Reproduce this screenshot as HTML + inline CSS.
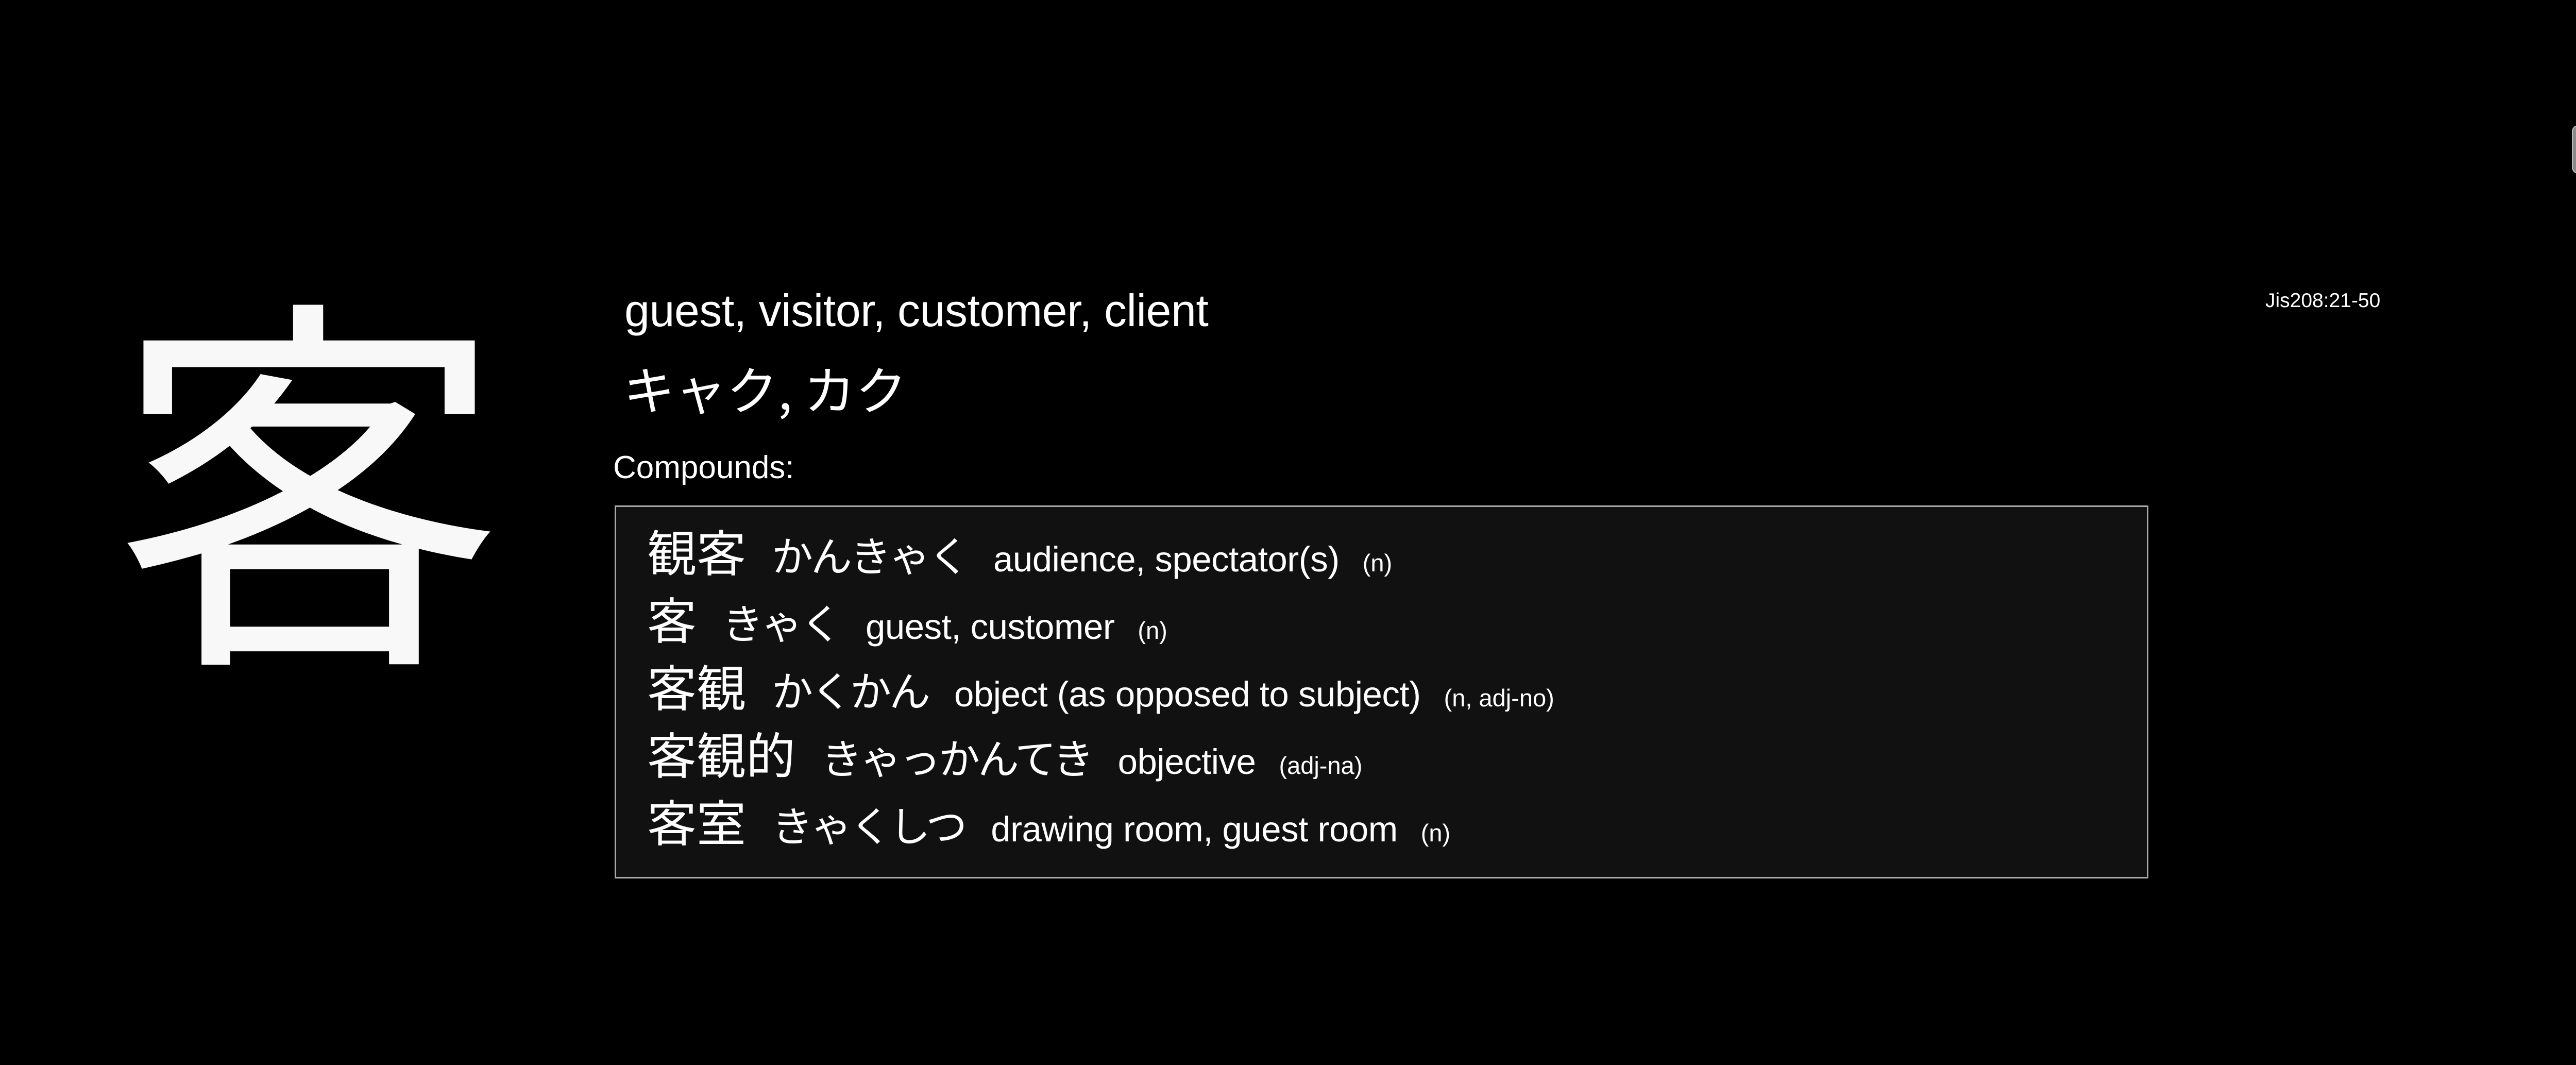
<!DOCTYPE html>
<html><head><meta charset="utf-8"><style>
html,body{margin:0;padding:0;background:#000;width:5008px;height:2067px;overflow:hidden;position:relative;color:#fff;font-family:"Liberation Sans","Noto Sans CJK JP",sans-serif}
.a{position:absolute;white-space:nowrap;line-height:1}
.big{left:220px;top:519px;font-size:760px;line-height:760px;font-family:"Noto Sans CJK JP",sans-serif;color:#f8f8f8}
.box{position:absolute;left:1193px;top:981px;width:2971px;height:718px;border:3px solid #aaa;background:#111;box-sizing:content-box;padding:0}
.rows{position:absolute;left:60px;top:18px}
.r{height:131px;line-height:131px;white-space:nowrap;font-size:0}
.r span{display:inline-block;vertical-align:baseline}
.k{font-size:96px;font-family:"Noto Sans CJK JP",sans-serif;margin-right:50px}
.h{font-size:80px;font-family:"Noto Sans CJK JP",sans-serif;letter-spacing:-4px;margin-right:50px}
.e{font-size:69px;margin-right:45px;letter-spacing:-0.5px}
.p{font-size:47px}
</style></head><body>
<div class="a big">客</div>
<div class="a" style="left:1212px;top:559px;font-size:88px;letter-spacing:-0.5px">guest, visitor, customer, client</div>
<div class="a" style="left:1210px;top:702px;font-size:100px;font-family:'Noto Sans CJK JP',sans-serif">キャク, カク</div>
<div class="a" style="left:1190px;top:877px;font-size:62px">Compounds:</div>
<div class="a" style="left:4397px;top:564px;font-size:39px">Jis208:21-50</div>
<div style="position:absolute;left:4992px;top:243px;width:20px;height:94px;background:#8a8a8a;border:2px solid #bbb;border-radius:12px 0 0 12px;box-sizing:border-box"></div>
<div class="box"><div class="rows">
<div class="r"><span class="k">観客</span><span class="h">かんきゃく</span><span class="e">audience, spectator(s)</span><span class="p">(n)</span></div>
<div class="r"><span class="k">客</span><span class="h">きゃく</span><span class="e">guest, customer</span><span class="p">(n)</span></div>
<div class="r"><span class="k">客観</span><span class="h">かくかん</span><span class="e">object (as opposed to subject)</span><span class="p">(n, adj-no)</span></div>
<div class="r"><span class="k">客観的</span><span class="h">きゃっかんてき</span><span class="e">objective</span><span class="p">(adj-na)</span></div>
<div class="r"><span class="k">客室</span><span class="h">きゃくしつ</span><span class="e">drawing room, guest room</span><span class="p">(n)</span></div>
</div></div>
</body></html>
